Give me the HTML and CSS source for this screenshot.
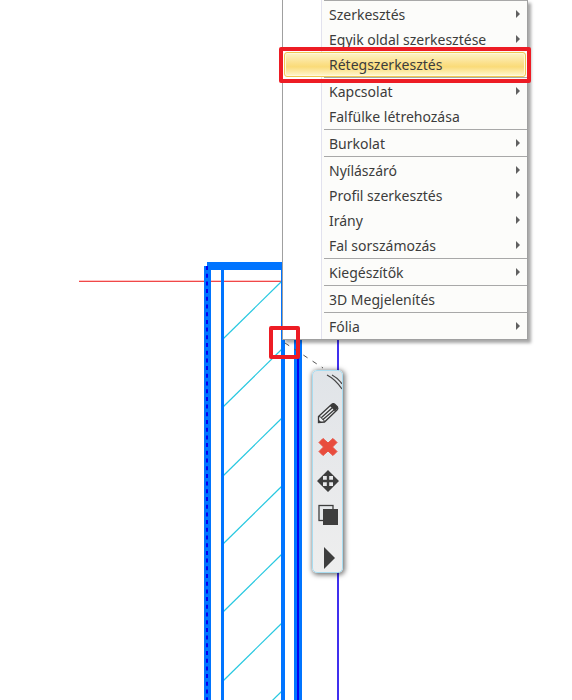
FILE: index.html
```html
<!DOCTYPE html>
<html lang="hu">
<head>
<meta charset="UTF-8">
<meta name="viewport" content="width=device-width, initial-scale=1.0">
<title>Rétegszerkesztés</title>
<link rel="stylesheet" href="styles.css">
</head>
<body>
<main class="workspace">
    <svg class="drawing" aria-hidden="true">
        <!-- reference line -->
        <rect x="79" y="280" width="203" height="1" fill="#ffc4c4"/>
        <rect x="79" y="281" width="203" height="1" fill="#f04848"/>
        <!-- hatching -->
        <g stroke="#27c8e0" stroke-width="1.2">
            <line x1="223" y1="339" x2="282" y2="281"/>
            <line x1="223" y1="407" x2="282" y2="349"/>
            <line x1="223" y1="476" x2="282" y2="418"/>
            <line x1="223" y1="544" x2="282" y2="486"/>
            <line x1="223" y1="612" x2="282" y2="554"/>
            <line x1="223" y1="681" x2="282" y2="623"/>
            <line x1="223" y1="749" x2="282" y2="691"/>
        </g>
        <!-- wall layers -->
        <g fill="#0074ff">
            <rect x="207" y="262" width="76" height="8"/>
            <rect x="204" y="266" width="7" height="100%"/>
            <rect x="221" y="269" width="3" height="100%"/>
            <rect x="281" y="262" width="4" height="100%"/>
            <rect x="294" y="300" width="8" height="100%"/>
        </g>
        <line x1="207" y1="266" x2="207" y2="100%" stroke="#0000f0" stroke-width="2" stroke-dasharray="4 3.7"/>
        <rect x="297" y="300" width="2" height="100%" fill="#0000f0"/>
        <rect x="337" y="300" width="2" height="100%" fill="#4030ee"/>
    </svg>

    <ul class="menu">
        <li class="group"><button>Szerkesztés</button><span class="arrow"></span></li>
        <li><button>Egyik oldal szerkesztése</button><span class="arrow"></span></li>
        <li class="active"><button>Rétegszerkesztés</button></li>
        <li class="group"><button>Kapcsolat</button><span class="arrow"></span></li>
        <li><button>Falfülke létrehozása</button></li>
        <li class="group"><button>Burkolat</button><span class="arrow"></span></li>
        <li class="group"><button>Nyílászáró</button><span class="arrow"></span></li>
        <li><button>Profil szerkesztés</button><span class="arrow"></span></li>
        <li><button>Irány</button><span class="arrow"></span></li>
        <li><button>Fal sorszámozás</button><span class="arrow"></span></li>
        <li class="group"><button>Kiegészítők</button><span class="arrow"></span></li>
        <li class="group"><button>3D Megjelenítés</button></li>
        <li class="group"><button>Fólia</button><span class="arrow"></span></li>
    </ul>

    <svg class="leader" width="40" height="28" aria-hidden="true">
        <line x1="1" y1="1" x2="39" y2="26" stroke="#555" stroke-dasharray="5 6"/>
    </svg>
    <div class="node-mark"></div>

    <div class="toolbar">
        <svg class="grip" width="16" height="18" viewBox="0 0 16 18" aria-hidden="true">
            <path d="M1 2Q9 6 16 16M6 2Q12 5 16 11" fill="none" stroke="#444" stroke-width="1.3"/>
        </svg>
        <button aria-label="Szerkesztés">
            <svg width="24" height="24" viewBox="0 0 24 24">
                <path d="M2.500 15.500L15.500 3.500Q17 2 18.500 3L21.500 6Q22.500 7.500 21 9L8.500 21L2.500 21.500Z" fill="#eceef0" stroke="#3a3a3a" stroke-width="1.300"/>
                <path d="M14 5L17.500 2L22 6.500L19 10.500Z" fill="#3a3a3a"/>
                <path d="M3 15.500L5.500 16.500L6 18L8 19V21" fill="none" stroke="#3a3a3a"/>
                <path d="M5.500 16.500L16 7M7 18.500L18 9" stroke="#3a3a3a" stroke-width="1.300"/>
                <path d="M2.500 18.500V21.500L5.500 21.500Z" fill="#3a3a3a"/>
            </svg>
        </button>
        <button aria-label="Törlés">
            <svg width="24" height="24" viewBox="0 0 24 24">
                <path d="M7 3.500L12 8L17 3.500L21 7.500L16.500 12L21 16.500L17 20.500L12 16L7 20.500L3 16.500L7.500 12L3 7.500Z" fill="#e84c3d" stroke="#e84c3d" stroke-linejoin="round"/>
            </svg>
        </button>
        <button aria-label="Mozgatás">
            <svg width="24" height="24" viewBox="0 0 24 24">
                <path d="M12 1L18 7H13.200V10.800H17V6L23 12L17 18V13.200H13.200V17H18L12 23L6 17H10.800V13.200H7V18L1 12L7 6V10.800H10.800V7H6Z" fill="#3e3e3e"/>
            </svg>
        </button>
        <button aria-label="Másolás">
            <svg width="24" height="24" viewBox="0 0 24 24">
                <rect x="3" y="2.500" width="14" height="15" fill="#e6e8ea" stroke="#3e3e3e" stroke-width="1.300"/>
                <rect x="7" y="6" width="15" height="16" fill="#3e3e3e"/>
            </svg>
        </button>
        <button class="more" aria-label="További eszközök">
            <svg width="24" height="24" viewBox="0 0 24 24">
                <path d="M8 1L19 12L8 23Z" fill="#3e3e3e"/>
            </svg>
        </button>
    </div>
</main>
</body>
</html>
```

FILE: styles.css
```css
body {
    margin: 0;
    background: #fff;
    font-family: "Noto Sans", "Open Sans", sans-serif;
}
.workspace {
    position: relative;
    min-height: 100vh;
    overflow: hidden;
}
.drawing {
    position: absolute;
    width: 100%;
    height: 100%;
}
button {
    margin: 0;
    padding: 0;
    border: none;
    background: none;
    color: #3c3c3c;
    font: inherit;
    cursor: pointer;
}

/* context menu */
.menu {
    position: absolute;
    top: 0;
    left: 282px;
    width: 244px;
    margin: 0;
    padding: 0;
    list-style: none;
    font-size: 14px;
    background: linear-gradient(90deg, #fff 38px, #e2e2ee 38px, #e2e2ee 39px, #fcfcfa 39px);
    border: 1px solid #a0a0a0;
    border-top: none;
    box-shadow: 3px 3px 3px rgba(0, 0, 0, 0.35);
}
.menu li {
    position: relative;
    display: flex;
    align-items: center;
    height: 25px;
}
.menu li button {
    flex: 1;
    height: 25px;
    padding-left: 46px;
    line-height: 25px;
    text-align: left;
    white-space: nowrap;
}
.menu .group {
    padding-top: 2px;
    background: linear-gradient(#a8a8a8, #a8a8a8) 41px 0 / 100% 1px no-repeat;
}
.arrow {
    width: 0;
    margin: 0 7px 2px 0;
    border: 4px solid transparent;
    border-left: 4px solid #606060;
    border-right: none;
}
.menu .active button {
    margin: 0 1px;
    padding-left: 44px;
    border: 1px solid #f0c850;
    border-radius: 3px;
    box-shadow: inset 0 0 0 1px #fff8dc;
    background: linear-gradient(#fdf3c8, #fbe08a 45%, #fadb78 60%, #fff6d0);
    line-height: 23px;
}
.menu .active::after {
    content: "";
    position: absolute;
    z-index: 1;
    inset: -5px -4px -6px -4px;
    border: 4px solid #ed1c24;
    border-radius: 2px;
}

/* selected node */
.leader {
    position: absolute;
    top: 342px;
    left: 284px;
}
.node-mark {
    position: absolute;
    top: 326px;
    left: 269px;
    width: 23px;
    height: 25px;
    border: 4px solid #ed1c24;
    border-radius: 2px;
}

/* floating toolbar */
.toolbar {
    position: absolute;
    top: 370px;
    left: 312px;
    display: flex;
    flex-direction: column;
    align-items: center;
    gap: 10px;
    width: 29px;
    padding-top: 2px;
    padding-bottom: 2px;
    border: 1px solid #a8dcf0;
    border-radius: 5px;
    background: linear-gradient(#e0e4e8, #e8e9eb 50%, #eeeeee);
    box-shadow: 1px 1px 5px 1px rgba(0, 0, 0, 0.55);
}
.grip {
    align-self: flex-end;
}
.toolbar button {
    width: 24px;
    height: 24px;
}
.toolbar svg {
    display: block;
}
.toolbar .more {
    margin-top: 9px;
}
```
